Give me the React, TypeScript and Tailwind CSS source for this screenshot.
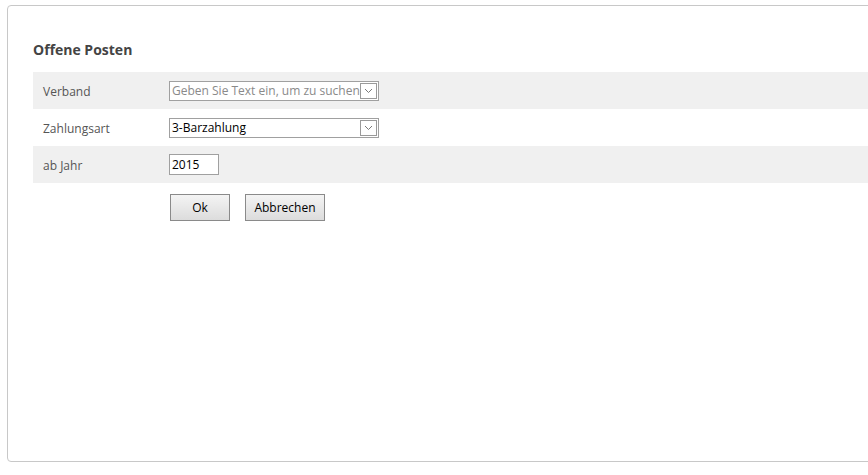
function Chevron() {
  return (
    <span className="flex h-[16px] w-[17px] items-center justify-center border border-[#9a9a9a] bg-white">
      <svg width="9" height="6" viewBox="0 0 9 6" fill="none">
        <path d="M1 1l3.5 3.5L8 1" stroke="#7a7a7a" strokeWidth="1" />
      </svg>
    </span>
  );
}

function Row({ label, gray, children }: { label: string; gray?: boolean; children: React.ReactNode }) {
  return (
    <div className={`flex h-[37px] items-center ${gray ? "bg-[#f0f0f0]" : "bg-white"}`}>
      <div className="w-[136px] pl-[10px] pt-[2px] text-[12px] text-[#555]">{label}</div>
      {children}
    </div>
  );
}

export default function App() {
  return (
    <div className="h-[475px] w-[868px] overflow-hidden bg-white pl-[7px] pt-[5px] font-['Open_Sans','Liberation_Sans',sans-serif]">
      <div className="h-[457px] w-[900px] rounded-[4px] border border-[#c8c8c8] pl-[25px] pt-[35px]">
        <h1 className="mb-[13px] text-[14px] font-bold leading-[18px] text-[#444]">Offene Posten</h1>

        <Row label="Verband" gray>
          <div className="flex h-[20px] w-[210px] items-center border border-[#a0a0a0] bg-white pr-[1px]">
            <span className="flex-1 overflow-hidden whitespace-nowrap pl-[2px] text-[12px] text-[#8a8a8a]">
              Geben Sie Text ein, um zu suchen
            </span>
            <Chevron />
          </div>
        </Row>

        <Row label="Zahlungsart">
          <div className="flex h-[20px] w-[210px] items-center border border-[#a0a0a0] bg-white pr-[1px]">
            <span className="flex-1 pl-[2px] text-[12px] text-black">3-Barzahlung</span>
            <Chevron />
          </div>
        </Row>

        <Row label="ab Jahr" gray>
          <div className="flex h-[21px] w-[50px] items-center border border-[#a0a0a0] bg-white pl-[2px] text-[12px] text-black">
            2015
          </div>
        </Row>

        <div className="flex gap-[15px] pl-[137px] pt-[11px]">
          <button className="h-[27px] w-[60px] border border-[#8a8a8a] bg-gradient-to-b from-[#f4f4f4] to-[#dcdcdc] text-[12px] text-black">
            Ok
          </button>
          <button className="h-[27px] w-[80px] border border-[#8a8a8a] bg-gradient-to-b from-[#f4f4f4] to-[#dcdcdc] text-[12px] text-black">
            Abbrechen
          </button>
        </div>
      </div>
    </div>
  );
}
